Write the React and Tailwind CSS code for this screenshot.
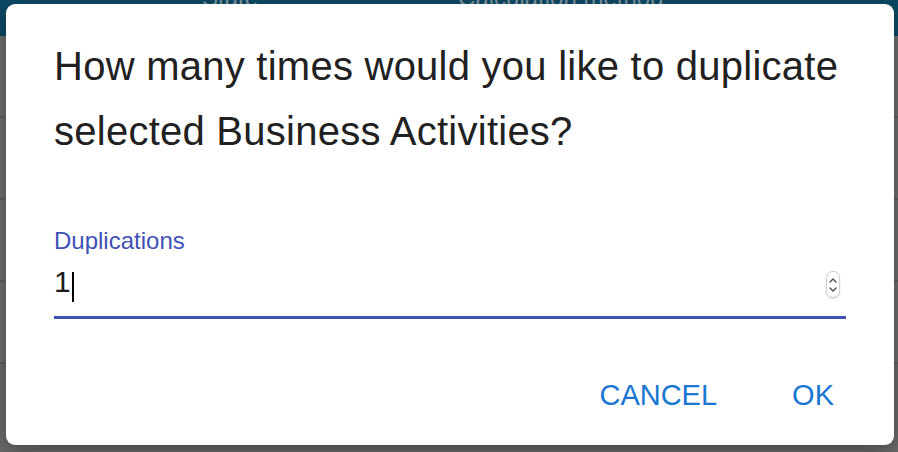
import React from 'react';

const rows = [0, 1, 2, 3];

const Spinner = () => (
  <div className="flex h-[27px] w-[14px] flex-col items-center justify-center rounded-full border border-[#d0d0d0] bg-white shadow-[0_1px_2px_rgba(0,0,0,0.15)]">
    <svg width="8" height="5" viewBox="0 0 8 5" fill="none">
      <path d="M1 4L4 1L7 4" stroke="#4a4a4a" strokeWidth="1.4" strokeLinecap="round" strokeLinejoin="round" />
    </svg>
    <svg width="8" height="5" viewBox="0 0 8 5" fill="none" className="mt-[4px]">
      <path d="M1 1L4 4L7 1" stroke="#4a4a4a" strokeWidth="1.4" strokeLinecap="round" strokeLinejoin="round" />
    </svg>
  </div>
);

const App = () => {
  return (
    <div className="relative h-[452px] w-full overflow-hidden bg-[#6b6b6b] [font-family:'Liberation_Sans',Arial,sans-serif]">
      {/* page behind the overlay */}
      <div className="flex h-[36px] items-start bg-[#0c4a64] text-[24px] leading-none text-[#7f95a1]">
        <span className="ml-[202px] -mt-[14px]">State</span>
        <span className="ml-[200px] -mt-[14px]">Calculation method</span>
      </div>
      {rows.map((r) => (
        <div key={r} className="h-[82px] border-b-2 border-[#5f5f5f] bg-[#6e6e6e]" />
      ))}

      {/* dialog */}
      <div className="absolute left-[6px] top-[4px] flex h-[441px] w-[888px] flex-col rounded-[9px] bg-white px-[48px] pt-[30px] shadow-[0_6px_20px_rgba(0,0,0,0.35)]">
        <h2 className="text-[40px] font-normal leading-[65px] tracking-[0.25px] text-[#212121]">
          How many times would you like to duplicate selected Business Activities?
        </h2>

        <div className="mt-[65px]">
          <label className="block text-[24px] leading-none text-[#3f51b5]">Duplications</label>
          <div className="mt-[15px] flex items-start border-b-[3px] border-[#3f51b5] pb-[18px]">
            <div className="flex h-[28px] flex-1 items-start text-[30px] leading-[28px] text-[#1a1a1a]">
              <span>1</span>
              <span className="ml-[1px] mt-[4px] h-[30px] w-[2px] shrink-0 bg-black" />
            </div>
            <div className="mr-[6px] mt-[3px]">
              <Spinner />
            </div>
          </div>
        </div>

        <div className="mt-[62px] flex justify-end gap-[51px]">
          <button className="px-[12px] text-[29px] leading-none text-[#1976d2]">CANCEL</button>
          <button className="px-[12px] text-[29px] leading-none text-[#1976d2]">OK</button>
        </div>
      </div>
    </div>
  );
};

export default App;
